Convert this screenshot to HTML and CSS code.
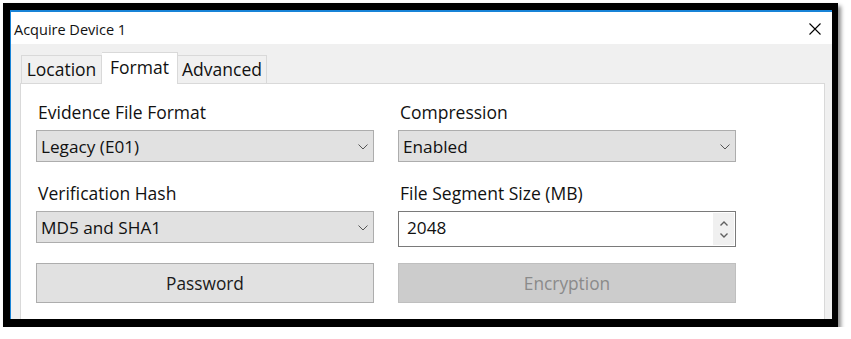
FILE: index.html
```html
<!DOCTYPE html>
<html lang="en">
<head>
    <meta charset="UTF-8">
    <title>Acquire Device 1</title>
    <link rel="stylesheet" href="styles.css">
</head>
<body>
    <div class="window">
        <div class="window-inner">
            <div class="titlebar">
                <span class="title">Acquire Device 1</span>
                <svg class="close" width="12" height="12" viewBox="0 0 12 12">
                    <path d="M0.5 0.5 L11.5 11.5 M11.5 0.5 L0.5 11.5" stroke="#000" stroke-width="1.1" fill="none"/>
                </svg>
            </div>

            <div class="dialog-body">
                <div class="tabs">
                    <div class="tab tab-location">Location</div>
                    <div class="tab tab-format active">Format</div>
                    <div class="tab tab-advanced">Advanced</div>
                </div>

                <div class="panel">
                    <div class="form-grid">
                        <div class="field">
                            <label>Evidence File Format</label>
                            <div class="select">
                                <span>Legacy (E01)</span>
                                <svg class="chevron" width="10" height="6" viewBox="0 0 10 6"><path d="M0.5 0.5 L5 5 L9.5 0.5" stroke="#555" fill="none"/></svg>
                            </div>
                        </div>
                        <div class="field">
                            <label>Compression</label>
                            <div class="select">
                                <span>Enabled</span>
                                <svg class="chevron" width="10" height="6" viewBox="0 0 10 6"><path d="M0.5 0.5 L5 5 L9.5 0.5" stroke="#555" fill="none"/></svg>
                            </div>
                        </div>
                        <div class="field">
                            <label>Verification Hash</label>
                            <div class="select">
                                <span>MD5 and SHA1</span>
                                <svg class="chevron" width="10" height="6" viewBox="0 0 10 6"><path d="M0.5 0.5 L5 5 L9.5 0.5" stroke="#555" fill="none"/></svg>
                            </div>
                        </div>
                        <div class="field">
                            <label>File Segment Size (MB)</label>
                            <div class="spinbox">
                                <span>2048</span>
                                <div class="spin">
                                    <svg width="8" height="5" viewBox="0 0 8 5"><path d="M0.5 4.5 L4 1 L7.5 4.5" stroke="#606060" stroke-width="1.4" fill="none"/></svg>
                                    <svg width="8" height="5" viewBox="0 0 8 5"><path d="M0.5 0.5 L4 4 L7.5 0.5" stroke="#606060" stroke-width="1.4" fill="none"/></svg>
                                </div>
                            </div>
                        </div>
                        <button class="btn">Password</button>
                        <button class="btn disabled">Encryption</button>
                    </div>
                </div>
            </div>
        </div>
    </div>
</body>
</html>
```

FILE: styles.css
```css
* {
    margin: 0;
    padding: 0;
    box-sizing: border-box;
}

body {
    background-color: #ffffff;
    font-family: 'Open Sans', 'Noto Sans', sans-serif;
    color: #000000;
    overflow: hidden;
}

.window {
    margin: 3px 0 0 3px;
    width: 835px;
    height: 324px;
    border-style: solid;
    border-color: #000000;
    border-width: 7px 6px 8px 7px;
    box-shadow: 3px 3px 4px rgba(0, 0, 0, 0.45);
    overflow: hidden;
}

.window-inner {
    height: 100%;
    border-top: 2px solid #1883d7;
    border-left: 1px solid #1883d7;
    background-color: #f0f0f0;
    display: flex;
    flex-direction: column;
}

.titlebar {
    height: 32px;
    background-color: #ffffff;
    display: flex;
    align-items: center;
    justify-content: space-between;
    padding: 0 11px 0 3px;
}

.title {
    font-size: 14.5px;
    margin-top: 3px;
    color: #111111;
}

.close {
    margin-top: 2px;
}

.dialog-body {
    flex: 1;
    padding: 8px 7px 0 9px;
    display: flex;
    flex-direction: column;
}

.tabs {
    display: flex;
    align-items: flex-end;
    height: 31px;
    padding-left: 1px;
}

.tab {
    height: 28px;
    border: 1px solid #d9d9d9;
    border-bottom: none;
    font-size: 17.5px;
    line-height: 27px;
    text-align: center;
    color: #111111;
    background-color: #f0f0f0;
}

.tab-location {
    width: 81px;
}

.tab-format {
    width: 76px;
}

.tab-advanced {
    width: 89px;
    border-left: none;
}

.tab.active {
    height: 32px;
    line-height: 29px;
    background-color: #ffffff;
    border-left: none;
    margin-bottom: -1px;
    position: relative;
    z-index: 1;
}

.panel {
    flex: 1;
    background-color: #ffffff;
    border: 1px solid #d9d9d9;
    border-bottom: none;
    padding: 17px 0 0 15px;
}

.form-grid {
    display: grid;
    grid-template-columns: 338px 338px;
    column-gap: 24px;
    row-gap: 20px;
    align-items: start;
}

.field label {
    display: block;
    font-size: 17.5px;
    line-height: 22px;
    padding-left: 2px;
    margin-bottom: 7px;
    color: #111111;
}

.select {
    height: 32px;
    background-color: #e1e1e1;
    border: 1px solid #adadad;
    display: flex;
    align-items: center;
    justify-content: space-between;
    padding: 0 5px 0 4px;
    font-size: 17.2px;
    color: #111111;
}

.chevron {
    margin-top: 1px;
}

.spinbox {
    height: 36px;
    background-color: #ffffff;
    border: 1px solid #7a7a7a;
    display: flex;
    align-items: center;
    justify-content: space-between;
    padding: 0 0 0 8px;
    font-size: 17.2px;
    color: #111111;
}

.spinbox span {
    margin-top: -3px;
}

.spin {
    width: 21px;
    height: 32px;
    margin-right: 1px;
    background-color: #f0f0f0;
    display: flex;
    flex-direction: column;
    align-items: center;
    justify-content: space-around;
    padding: 4px 0 3px;
}

.spin svg {
    display: block;
}

.btn {
    height: 40px;
    margin-top: -4px;
    background-color: #e1e1e1;
    border: 1px solid #adadad;
    font-family: 'Open Sans', 'Noto Sans', sans-serif;
    font-size: 17.3px;
    color: #1a1a1a;
}

.btn.disabled {
    background-color: #cccccc;
    border-color: #bfbfbf;
    color: #8a8a8a;
}
```
